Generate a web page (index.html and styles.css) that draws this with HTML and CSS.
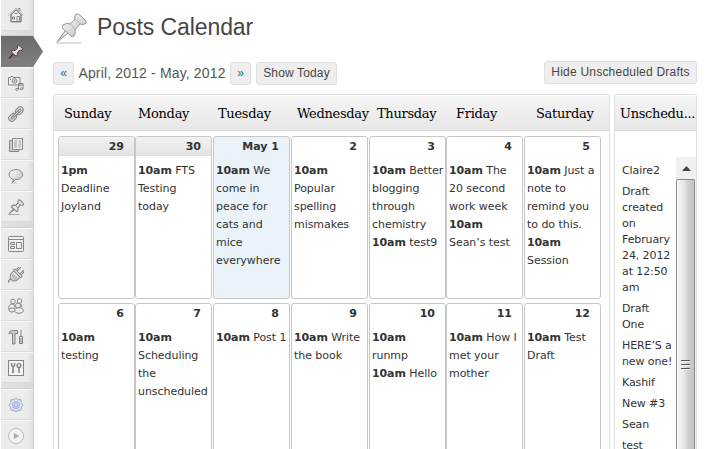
FILE: index.html
```html
<!DOCTYPE html>
<html lang="en">
<head>
<meta charset="utf-8">
<title>Posts Calendar</title>
<link rel="stylesheet" href="styles.css">
</head>
<body>
<svg width="0" height="0" class="defs">
  <defs>
    <linearGradient id="metal" x1="0" y1="0" x2="1" y2="1"><stop offset="0" stop-color="#fff"/><stop offset="1" stop-color="#bbb"/></linearGradient>
    <symbol id="pin" viewBox="0 0 32 32">
      <path d="M1 31h25" stroke="#bbb" stroke-width="1"/>
      <path d="M2 30 L11 18 L14 20 Z" fill="#eee" stroke="#888" stroke-width="1"/>
      <path d="M8 13q4-3 7-1l5-5q-1-3 1-5 2-1 5 2l4 4q2 3 0 4-3 1-5 0l-5 6q1 4-1 6-2 2-4-1l-7-6q-2-2 0-4z" fill="url(#metal)" stroke="#999" stroke-width="1"/>
      <path d="M15 12q3 1 5 6M20 7q3 1 5 5" stroke="#bbb" fill="none"/>
    </symbol>
  </defs>
</svg>
<div class="page">
  <nav class="menu">
    <a class="item first"><svg viewBox="0 0 16 16"><path d="M3 8v7h10V8L8 3z" fill="#eee"/><path d="M1 8.500 8 1.500l7 7M3 8v6.500h10V8M12 4V1.500h-1.500v1" /><path d="M4.500 10h2v2h-2zM9 14.500V9.500h2.500v5M6.500 6.500h3"/></svg></a>
    <div class="sep"></div>
    <a class="item active"><svg viewBox="0 0 32 32"><path d="M1 31h22" stroke="#a08a88"/><path d="M2 30 12 18l2 2z" fill="#ddd" stroke="#3b2222" stroke-width="2"/><path d="M8 14q4-3 7-1l5-5q-1-3 1-6 2-1 5 2l4 4q2 3 0 4-3 1-5 0l-5 6q1 4-1 6-2 2-4-1l-7-6q-2-1 0-3z" fill="#ecdcda" stroke="#4a2d2b" stroke-width="2"/></svg></a>
    <a class="item"><svg viewBox="0 0 16 16"><path d="M.5 2.500h2l.5-1h2l.5 1h6.500v7.500H.5zM2 4.500h1" fill="#eee"/><circle cx="6.500" cy="6" r="2.300"/><circle cx="6.500" cy="6" r=".7"/><path d="M10.500 14V8.500h4.500v5M10.500 10H15"/><ellipse cx="9" cy="14.300" rx="1.400" ry="1"/><ellipse cx="13.500" cy="13.800" rx="1.400" ry="1"/></svg></a>
    <a class="item"><svg viewBox="0 0 16 16"><g transform="rotate(-45 8 8)"><rect x="-1" y="5" width="8.500" height="6" rx="3" fill="#ddd"/><rect x="1.300" y="7" width="4" height="2" rx="1"/><rect x="8.500" y="5" width="8.500" height="6" rx="3" fill="#ddd"/><rect x="10.700" y="7" width="4" height="2" rx="1"/><path d="M5 7.200h6v1.600H5z" fill="#eee"/></g></svg></a>
    <a class="item"><svg viewBox="0 0 16 16"><path d="M4.500 3.500h-3v11h9v-2" fill="#ccc"/><path d="M4.500 1.500h10v11h-10z" fill="#eee"/><path d="M6 4h3M6 6h3M6 8h3M6 10h3M10.500 4H13M10.500 6H13M10.500 8H13M10.500 10H13" stroke="#999"/></svg></a>
    <a class="item"><svg viewBox="0 0 16 16"><path d="M3 15h6" stroke="#bbb"/><path d="M5 11.300C-1 9-.5 2 8 1.500c8 0 9 9 1 10H7L4.500 14.500l1-3z" fill="url(#metal)"/></svg></a>
    <a class="item"><svg viewBox="0 0 32 32"><path d="M1 31h22" stroke="#aaa" stroke-width="2"/><path d="M2 30 12 18l2 2z" fill="#ddd" stroke-width="2"/><path d="M8 14q4-3 7-1l5-5q-1-3 1-6 2-1 5 2l4 4q2 3 0 4-3 1-5 0l-5 6q1 4-1 6-2 2-4-1l-7-6q-2-1 0-3z" fill="#e8e8e8" stroke-width="2.200"/><path d="m15 13 5 5M20 8l5 5" stroke="#999" stroke-width="2"/></svg></a>
    <div class="sep"></div>
    <a class="item"><svg viewBox="0 0 16 16"><rect x=".5" y=".5" width="15" height="15" rx="1" fill="#eee"/><path d="M1 3.500h14"/><path d="M2.500 6.500h4v2h-4zM2.500 10.500h4v2h-4zM8.500 6.500h5v6h-5z"/></svg></a>
    <a class="item"><svg viewBox="0 0 16 16"><path d="M.8 15.500q-.5-3 3-3.500" stroke-width="1.500"/><g transform="rotate(45 8 8)"><path d="M3.500 6.500h9V9q0 4-3 5.500h-3q-3-1.500-3-5.500z" fill="url(#metal)"/><path d="M2.800 4.500h10.400v2H2.800z" fill="#eee"/><path d="M4.500 4.500V-.5h1.500v5M10 4.500v-5h1.500v5" fill="#eee"/><path d="M6 9v3M8 9v3M10 9v3" stroke="#999"/></g></svg></a>
    <a class="item"><svg viewBox="0 0 16 16"><circle cx="5" cy="3.500" r="2.300" fill="#eee"/><circle cx="11.500" cy="3" r="2.300" fill="#eee"/><path d="M1 12q-1-6 3-6 3 0 3 4M9 6q4-2 5 3" fill="#eee"/><circle cx="10" cy="7.500" r="2.500" fill="#eee"/><ellipse cx="4" cy="12" rx="3" ry="2" fill="#eee"/><ellipse cx="11" cy="12.500" rx="4.300" ry="2.700" fill="#eee"/></svg></a>
    <a class="item"><svg viewBox="0 0 16 16"><path d="M1 4q1-3 4-2.500h4.500v3H7v10.500H4.500V4.500q-2-1-3.500.5z" fill="#ccc"/><path d="M13 1v6M11.500 7.500h3v7h-3zM13 9v5"/></svg></a>
    <a class="item"><svg viewBox="0 0 16 16"><rect x=".5" y=".5" width="15" height="15" fill="#f4f4f4"/><path d="M5 7v5.500M11 7.500v5.500M3.500 3v2.500L5 7l1.500-1.500V3" stroke-width="1.500"/><circle cx="11" cy="5.500" r="1.900" stroke-width="1.400"/><circle cx="5" cy="12" r=".8"/></svg></a>
    <div class="sep"></div>
    <a class="item blue"><svg viewBox="0 0 16 16"><path d="m8 .8 1.700 2 3.400-.1.200 3 2 2.300-2 2.300-.2 3-3.400-.1-1.700 2-1.700-2-3.400.1-.2-3L.7 8l2-2.300.2-3 3.400.1z" fill="#dde4f2"/><circle cx="8" cy="8" r="3.500" fill="#ccd6ea"/><circle cx="8" cy="8" r="1.500" fill="#fff"/></svg></a>
    <a class="item last"><svg viewBox="0 0 16 16"><circle cx="8" cy="8" r="7.500" fill="#f3f3f3" stroke="#bbb"/><path d="m5.800 5 5.500 3-5.500 3z" fill="#aaa" stroke="none"/></svg></a>
  </nav>
  <main class="main">
    <header class="title"><svg class="big-pin"><use href="#pin"/></svg><h1>Posts Calendar</h1></header>
    <div class="toolbar">
      <a class="btn arrow">«</a><span class="range">April, 2012 - May, 2012</span><a class="btn arrow">»</a><a class="btn today">Show Today</a><a class="btn hide">Hide Unscheduled Drafts</a>
    </div>
    <div class="panels">
      <section class="panel calendar">
        <div class="head names"><span>Sunday</span><span>Monday</span><span>Tuesday</span><span>Wednesday</span><span>Thursday</span><span>Friday</span><span>Saturday</span></div>
        <div class="days">
          <div class="day past"><h2>29</h2><p><b>1pm</b><br>Deadline<br>Joyland</p></div>
          <div class="day past"><h2>30</h2><p><b>10am</b> FTS<br>Testing<br>today</p></div>
          <div class="day now"><h2>May 1</h2><p><b>10am</b> We<br>come in<br>peace for<br>cats and<br>mice<br>everywhere</p></div>
          <div class="day"><h2>2</h2><p><b>10am</b><br>Popular<br>spelling<br>mismakes</p></div>
          <div class="day"><h2>3</h2><p><b>10am</b> Better<br>blogging<br>through<br>chemistry<br><b>10am</b> test9</p></div>
          <div class="day"><h2>4</h2><p><b>10am</b> The<br>20 second<br>work week<br><b>10am</b><br>Sean’s test</p></div>
          <div class="day"><h2>5</h2><p><b>10am</b> Just a<br>note to<br>remind you<br>to do this.<br><b>10am</b><br>Session</p></div>
          <div class="day"><h2>6</h2><p><b>10am</b><br>testing</p></div>
          <div class="day"><h2>7</h2><p><b>10am</b><br>Scheduling<br>the<br>unscheduled</p></div>
          <div class="day"><h2>8</h2><p><b>10am</b> Post 1</p></div>
          <div class="day"><h2>9</h2><p><b>10am</b> Write<br>the book</p></div>
          <div class="day"><h2>10</h2><p><b>10am</b><br>runmp<br><b>10am</b> Hello</p></div>
          <div class="day"><h2>11</h2><p><b>10am</b> How I<br>met your<br>mother</p></div>
          <div class="day"><h2>12</h2><p><b>10am</b> Test<br>Draft</p></div>
        </div>
      </section>
      <section class="panel drafts">
        <div class="head">Unschedu...</div>
        <div class="scroller">
          <ul><li>Claire2</li><li>Draft<br>created<br>on<br>February<br>24, 2012<br>at 12:50<br>am</li><li>Draft<br>One</li><li>HERE’S a<br>new one!</li><li>Kashif</li><li>New #3</li><li>Sean</li><li>test</li></ul>
          <div class="bar"><div class="up"><svg width="9" height="5"><path d="M0 5 4.500 0 9 5z" fill="#444"/></svg></div><div class="thumb"><i></i><i></i><i></i></div></div>
        </div>
      </section>
    </div>
  </main>
</div>
</body>
</html>
```

FILE: styles.css
```css
* { box-sizing: border-box; }
html, body { margin: 0; height: 449px; overflow: hidden; background: #fff; }
body { font-family: "DejaVu Sans", Verdana, sans-serif; font-size: 11px; color: #333; }
h1, h2, p, ul { margin: 0; padding: 0; font-weight: normal; }
.defs { position: absolute; }
.page { display: flex; height: 449px; }

.menu { width: 34px; flex: none; margin-right: 19px; padding-left: 1px; border-right: 1px solid #d4d4d4; background: linear-gradient(90deg, #ececec 0 26px, #dcdcdc) 1px 0 no-repeat; }
.item { display: flex; height: 31px; align-items: center; padding-left: 7px; border-top: 1px solid #f9f9f9; border-bottom: 1px solid #dadada; }
.item svg { width: 16px; height: 16px; fill: none; stroke: #858585; stroke-width: 1; }
.item.first { border-top: 0; }
.sep { height: 5px; border-bottom: 1px solid #d0d0d0; background: linear-gradient(90deg, #e3e3e3, #d9d9d9); }
.menu .sep ~ .sep { height: 6px; }
.item.active { width: 42px; border: 0; background: linear-gradient(#6b6b6b, #808080); clip-path: polygon(0 0, 32px 0, 100% 50%, 32px 100%, 0 100%); }
.item.active svg { width: 15px; }
.item.blue svg { stroke: #9dacc9; }
.last { border-bottom: 0; }

.main { width: 644px; flex: none; }
.title { display: flex; height: 61px; padding: 12px 0 0 2px; }
.big-pin { width: 32px; height: 32px; flex: none; }
h1 { margin-left: 10px; padding-top: 1px; font: 23px/28px "Liberation Sans", Arial, sans-serif; color: #464646; white-space: nowrap; letter-spacing: -.08px; }

.toolbar { display: flex; height: 33px; align-items: flex-start; padding-top: 1px; font: 12px/21px "Liberation Sans", Arial, sans-serif; color: #464646; }
.btn { height: 23px; border: 1px solid #dfdfdf; border-radius: 3px; background: #eee; text-align: center; white-space: nowrap; }
.arrow { width: 21px; color: #21759b; }
.range { width: 156px; text-align: center; font-size: 14px; line-height: 22px; color: #555; letter-spacing: .15px; white-space: nowrap; }
.today { width: 81px; margin-left: 5px; letter-spacing: .15px; }
.hide { width: 153px; margin-left: auto; position: relative; top: -1px; letter-spacing: .22px; }

.panels { display: flex; gap: 4px; height: 355px; }
.panel { border: 1px solid #dfdfdf; border-bottom: 0; border-radius: 3px 3px 0 0; overflow: hidden; }
.calendar { width: 557px; }
.drafts { width: 83px; }
.head { height: 36px; border-top: 1px solid #fff; border-bottom: 1px solid #dfdfdf; background: linear-gradient(#f5f5f5, #e7e7e7); color: #000; font: 13px/35px "DejaVu Serif", serif; letter-spacing: -.3px; white-space: nowrap; }
.names { display: grid; grid-template-columns: 74px 80px 79px 80px 79px 80px 70px; padding-left: 10px; }
.drafts .head { padding-left: 5px; }

.days { display: grid; grid-template-columns: 77px 78px 78px 78px 77px 78px 77px; grid-auto-rows: 163px; row-gap: 4px; padding: 5px 0 0 4px; }
.day { width: 77px; border: 1px solid #c7c7c7; border-radius: 3px; overflow: hidden; white-space: nowrap; }
.day h2 { height: 19px; padding-right: 10px; text-align: right; font: bold 11px/19px "DejaVu Sans", sans-serif; }
.past h2 { background: linear-gradient(#f2f2f2, #e4e4e4); border-bottom: 1px solid #dfdfdf; }
.now { background: #eaf2fa; }
.day p { padding: 6px 0 0 2px; line-height: 18px; letter-spacing: -.05px; }
.day b { letter-spacing: -.1px; }

.scroller { display: flex; justify-content: space-between; padding-top: 26px; height: 318px; }
ul { list-style: none; padding: 6px 0 0 7px; white-space: nowrap; line-height: 16px; letter-spacing: -.1px; }
li { margin-bottom: 5px; }
.bar { display: flex; flex-direction: column; width: 20px; flex: none; background: #f0f0f0; }
.up { height: 22px; display: flex; align-items: center; justify-content: center; }
.thumb { flex: 1; width: 19px; border: 1px solid #8c8c8c; border-bottom: 0; border-radius: 2px 2px 0 0; background: linear-gradient(90deg, #f8f8f8 0, #e6e6e6 40%, #cfcfd2 65%, #c4c4c8); padding: 180px 4px 0; display: flex; flex-direction: column; gap: 2px; }
.thumb i { height: 2px; border-top: 1px solid #555; border-bottom: 1px solid #f5f5f5; }
```
